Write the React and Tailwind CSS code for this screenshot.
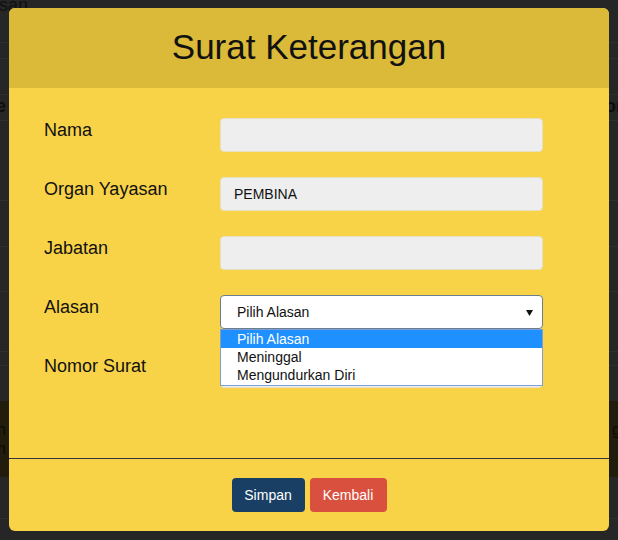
import React from "react";

function Row({ label, children }) {
  return (
    <div className="flex h-[34px] mb-[25px]">
      <div className="w-[176px] text-[18px] leading-6 text-[#111]">{label}</div>
      <div className="flex-1 relative">{children}</div>
    </div>
  );
}

function GrayInput({ value }) {
  return (
    <div className="h-[34px] w-full rounded-[4px] border border-[#e6dfc2] bg-[#eeeeee] pl-[13px] text-[14px] leading-[32px] text-[#111]">
      {value}
    </div>
  );
}

export default function App() {
  return (
    <div className="relative w-[618px] h-[540px] overflow-hidden bg-[#262626] font-['Liberation_Sans',Arial,sans-serif]">
      {/* dimmed page behind */}
      <div className="flex flex-col">
        <div className="h-[43px] border-b border-[#2f2f2f] text-[#111] text-[18px]">
          <div className="-mt-[5px] -ml-[1px] leading-5">san</div>
        </div>
        <div className="h-[16px] border-b border-[#2f2f2f]"></div>
        <div className="h-[36px] border-b border-[#2f2f2f]"></div>
        <div className="h-[26px] border-b border-[#2f2f2f] flex justify-between text-[#0d0d0d] text-[18px] font-bold leading-[22px]">
          <div className="-ml-[4px]">e</div>
          <div className="-mr-[5px]">or</div>
        </div>
        <div className="h-[80px] border-b border-[#2f2f2f]"></div>
        <div className="h-[46px] border-b border-[#2f2f2f]"></div>
        <div className="h-[45px] border-b border-[#2f2f2f]"></div>
        <div className="h-[60px] border-b border-[#2f2f2f]"></div>
        <div className="h-[14px] border-b border-[#2f2f2f]"></div>
        <div className="h-[35px]"></div>
        <div className="h-[76px] bg-[#221c0c] text-[#0d0a04] text-[16px] pt-[20px] leading-[18px] flex justify-between">
          <div className="-ml-[3px] flex flex-col gap-[1px]">
            <span>n</span>
            <span>n</span>
          </div>
          <div className="-mr-[3px]">g</div>
        </div>
        <div className="h-[42px] border-b border-[#2f2f2f]"></div>
      </div>

      {/* modal */}
      <div className="absolute left-[9px] top-[8px] w-[600px] h-[523px] rounded-[6px] overflow-hidden bg-[#f8d347] flex flex-col">
        <div className="h-[80px] shrink-0 bg-[#dbb939] flex items-center justify-center text-[35px] text-[#111] pb-[1px]">
          Surat Keterangan
        </div>
        <div className="h-[370px] shrink-0 pt-[30px] pl-[35px] pr-[66px]">
          <Row label="Nama">
            <GrayInput value="" />
          </Row>
          <Row label="Organ Yayasan">
            <GrayInput value="PEMBINA" />
          </Row>
          <Row label="Jabatan">
            <GrayInput value="" />
          </Row>
          <Row label="Alasan">
            <div className="relative h-[34px] w-full rounded-[4px] border border-[#6b7d90] bg-white pl-[16px] text-[14px] leading-[32px] text-[#111]">
              Pilih Alasan
              <svg className="absolute right-[9px] top-[14px]" width="7" height="6" viewBox="0 0 7 6">
                <polygon points="0,0 7,0 3.5,6" fill="#111" />
              </svg>
            </div>
            <div className="absolute left-0 right-0 top-[34px] z-10 h-[57px] border border-[#7f9ed4] bg-white text-[14px] leading-[18px] text-[#111]">
              <div className="h-[18px] bg-[#1e90ff] text-white pl-[16px]">Pilih Alasan</div>
              <div className="h-[18px] pl-[16px]">Meninggal</div>
              <div className="h-[18px] pl-[16px]">Mengundurkan Diri</div>
            </div>
          </Row>
          <Row label="Nomor Surat">
            <GrayInput value="" />
          </Row>
        </div>
        <div className="flex-1 border-t border-[#33373d] pt-[19px] flex justify-center gap-[5px]">
          <div className="h-[34px] w-[73px] rounded-[4px] bg-[#1a3f65] text-white text-[14px] flex items-center justify-center">
            Simpan
          </div>
          <div className="h-[34px] w-[77px] rounded-[4px] bg-[#d9503f] text-white text-[14px] flex items-center justify-center">
            Kembali
          </div>
        </div>
      </div>
    </div>
  );
}
